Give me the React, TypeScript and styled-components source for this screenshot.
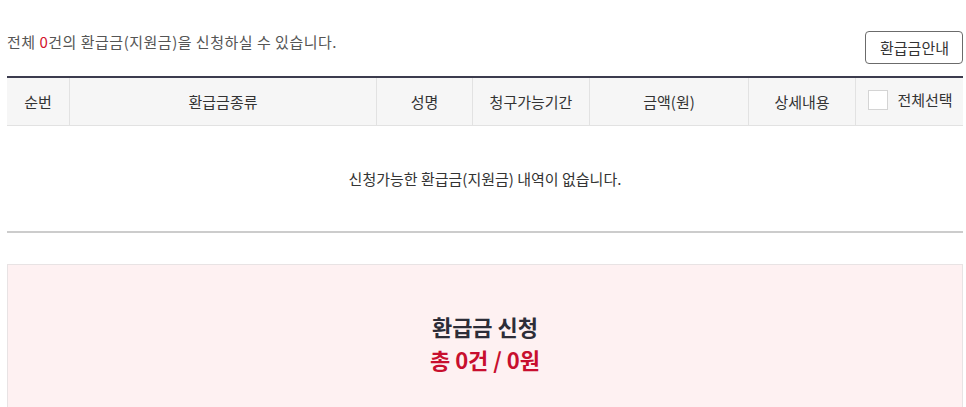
import React from "react";
import styled, { createGlobalStyle } from "styled-components";

const Global = createGlobalStyle`
  html, body { margin: 0; padding: 0; background: #fff; }
  body { font-family: "Noto Sans CJK KR", "Noto Sans", sans-serif; color: #333; }
`;

const Page = styled.div`
  padding: 31px 3px 0 7px;
`;

const TopBar = styled.div`
  display: flex;
  align-items: center;
  justify-content: space-between;
  height: 33px;
`;

const Summary = styled.p`
  margin: 0;
  font-size: 15px;
  color: #555;
  letter-spacing: 0.5px;
  position: relative;
  top: -6px;
`;

const Red = styled.span`
  color: #d3122b;
`;

const GuideButton = styled.button`
  height: 33px;
  padding: 0 13px 0 14px;
  border: 1px solid #6b6b6b;
  border-radius: 4px;
  background: #fff;
  font-family: inherit;
  font-size: 15px;
  color: #333;
`;

const Table = styled.table`
  width: 100%;
  margin-top: 12px;
  border-collapse: collapse;
  border-top: 2px solid #3c3c4e;
  table-layout: fixed;
`;

const Th = styled.th<{ $w?: number; $last?: boolean }>`
  width: ${(p) => (p.$w ? `${p.$w}px` : "auto")};
  height: 47px;
  padding: 0;
  background: #f6f6f6;
  border-bottom: 1px solid #e2e2e2;
  border-right: ${(p) => (p.$last ? "none" : "1px solid #e2e2e2")};
  font-weight: 400;
  font-size: 15px;
  color: #333;
`;

const CheckWrap = styled.span`
  display: inline-flex;
  align-items: center;
  gap: 9px;
  margin-left: 2px;
`;

const CheckBox = styled.span`
  width: 20px;
  height: 20px;
  border: 1px solid #d4d4d4;
  background: #fff;
  box-sizing: border-box;
`;

const EmptyCell = styled.td`
  height: 105px;
  text-align: center;
  font-size: 15px;
  color: #333;
  border-bottom: 2px solid #cccccc;
  padding: 0;
`;

const ApplyBox = styled.section`
  margin-top: 31px;
  height: 160px;
  background: #fef1f2;
  border: 1px solid #e8e3e4;
  display: flex;
  flex-direction: column;
  align-items: center;
  padding-top: 45px;
  box-sizing: border-box;
`;

const ApplyTitle = styled.h3`
  margin: 0;
  font-size: 22px;
  font-weight: 700;
  color: #2d2d38;
  line-height: 33px;
`;

const ApplyTotal = styled.p`
  margin: 0;
  font-size: 22px;
  font-weight: 700;
  color: #c80f2e;
  line-height: 33px;
`;

const cols = [
  { label: "순번", w: 62 },
  { label: "환급금종류", w: 306 },
  { label: "성명", w: 95 },
  { label: "청구가능기간", w: 116 },
  { label: "금액(원)", w: 158 },
  { label: "상세내용", w: 106 },
];

export default function App() {
  return (
    <>
      <Global />
      <Page>
        <TopBar>
          <Summary>
            전체 <Red>0</Red>건의 환급금(지원금)을 신청하실 수 있습니다.
          </Summary>
          <GuideButton>환급금안내</GuideButton>
        </TopBar>
        <Table>
          <thead>
            <tr>
              {cols.map((c) => (
                <Th key={c.label} $w={c.w}>
                  {c.label}
                </Th>
              ))}
              <Th $last>
                <CheckWrap>
                  <CheckBox />
                  전체선택
                </CheckWrap>
              </Th>
            </tr>
          </thead>
          <tbody>
            <tr>
              <EmptyCell colSpan={7}>신청가능한 환급금(지원금) 내역이 없습니다.</EmptyCell>
            </tr>
          </tbody>
        </Table>
        <ApplyBox>
          <ApplyTitle>환급금 신청</ApplyTitle>
          <ApplyTotal>총 0건 / 0원</ApplyTotal>
        </ApplyBox>
      </Page>
    </>
  );
}
